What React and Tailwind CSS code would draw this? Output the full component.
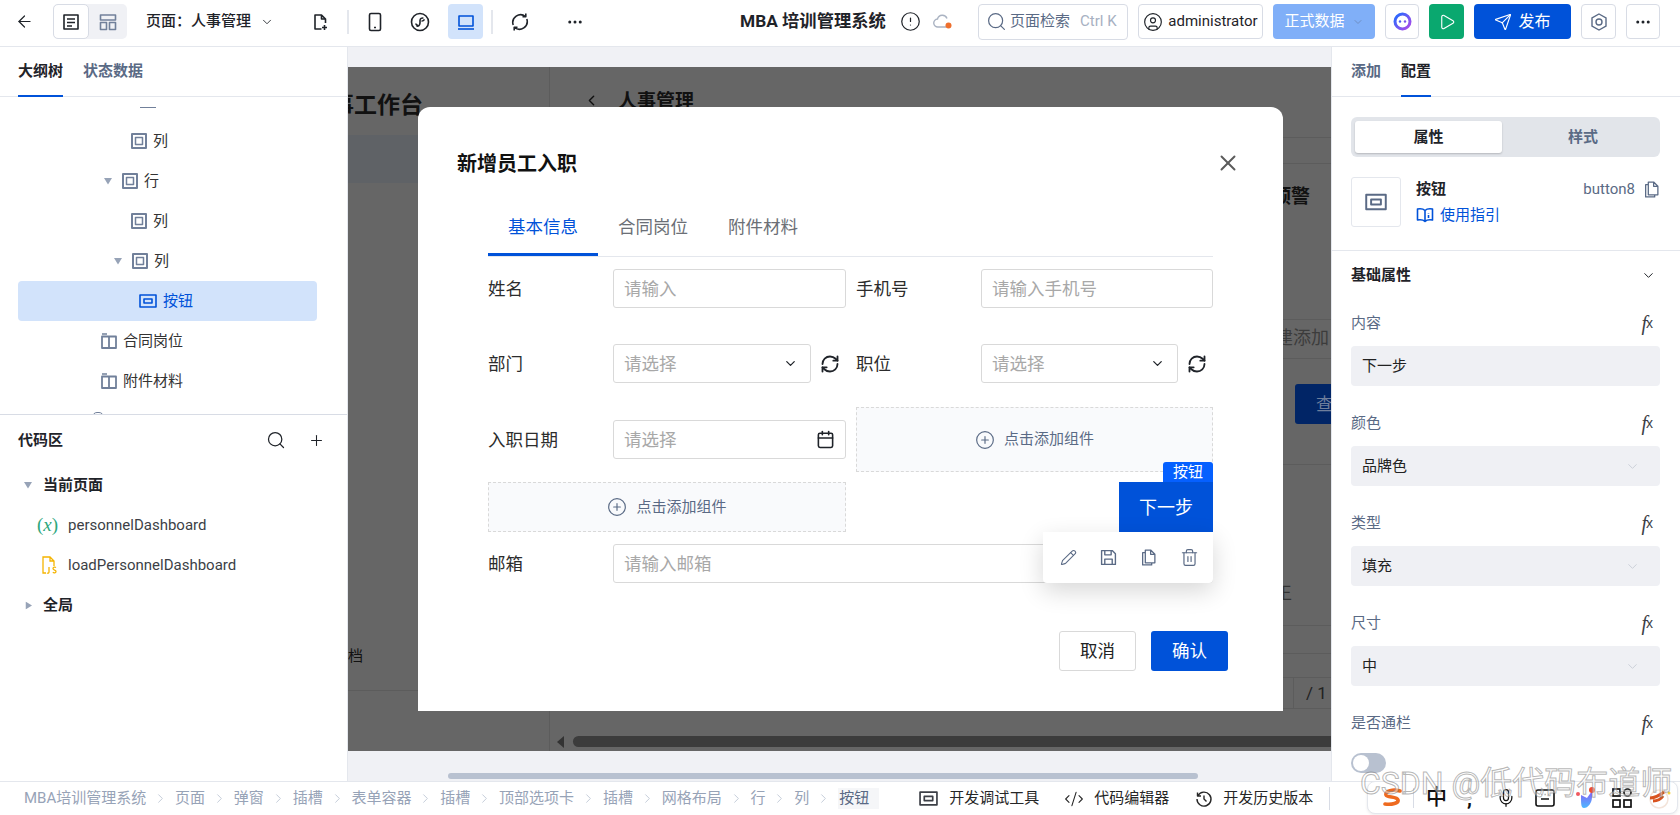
import React from 'react';
import {
  ArrowLeft, ChevronDown, ChevronLeft, ChevronRight, Ellipsis, Search, Plus, X, RefreshCw, CodeXml,
  Calendar, Pencil, Trash2, Mic, CirclePlus, Send, Play, Info, CircleUser,
} from 'lucide-react';

const BLUE = 'bg-[#0052d9]';

function Ico({ size = 18, className = '', children, box = 24 }) {
  return (
    <svg width={size} height={size} viewBox={`0 0 ${box} ${box}`} fill="none" stroke="currentColor" strokeWidth="1.6" strokeLinejoin="round" className={`shrink-0 ${className}`}>
      {children}
    </svg>
  );
}

const ColIcon = ({ size = 16 }) => (
  <Ico size={size} box={16} className="text-[#71809a]">
    <rect x="1" y="1" width="14" height="14" strokeWidth="2" />
    <rect x="4.500" y="4.500" width="7" height="7" strokeWidth="1.500" />
  </Ico>
);
const TabIcon = () => (
  <Ico size={16} box={16} className="text-[#71809a]">
    <path d="M1 3.500h14V15H1zM8 3.500V15" strokeWidth="1.800" />
    <path d="M1 1h5" strokeWidth="1.500" />
  </Ico>
);
const BtnIcon = ({ size = 18, className = 'text-[#0052d9]' }) => (
  <Ico size={size} box={18} className={className}>
    <rect x="1" y="3" width="16" height="12" />
    <rect x="5" y="7" width="8" height="4" />
  </Ico>
);
const Tri = ({ className = '' }) => (
  <svg width="8" height="7" viewBox="0 0 8 7" className={`shrink-0 ${className}`}><path d="M0 0h8L4 6.500z" fill="#97a3b7" /></svg>
);
const CopyIcon = ({ size = 16 }) => (
  <Ico size={size} box={16}>
    <path d="M5 1h5l4 4v8H5zM10 1v4h4M5 3.500H2.500V15H11v-2" strokeWidth="1.200" />
  </Ico>
);
const Fx = () => (
  <span className="mr-[7px] flex h-[22px] items-center font-['Liberation_Serif',serif] text-[20px] leading-none text-[#3c3f46]"><i>f</i><span className="ml-[-1px] font-['Liberation_Sans',sans-serif] text-[14px]">x</span></span>
);

function TreeRow({ pad, tri, icon, label }) {
  return (
    <div className={`flex h-10 items-center text-[15px] text-[#333] ${pad}`}>
      {tri && <Tri className="mr-[10px]" />}
      {icon}
      <span className="ml-[6px]">{label}</span>
    </div>
  );
}

function Header() {
  return (
    <header className="flex h-[47px] shrink-0 items-center border-b border-[#e4e7ed] bg-white pb-[3px] text-[#1f2329]">
      <ArrowLeft size={19} strokeWidth={1.5} className="ml-[15px] shrink-0" />
      <div className="ml-[19px] flex h-[35px] w-[74px] shrink-0 rounded-[5px] bg-[#f0f1f5]">
        <div className="flex w-[36px] items-center justify-center rounded-[5px] border border-[#d8dce5] bg-white">
          <Ico size={18} box={18}><rect x="2" y="2" width="14" height="14" /><path d="M5 6h8M5 9.500h8M5 13h5" /></Ico>
        </div>
        <div className="flex flex-1 items-center justify-center text-[#71809a]">
          <Ico size={18} box={18}><rect x="1.500" y="2" width="15" height="5" /><rect x="1.500" y="9.500" width="6" height="7" /><rect x="10.500" y="9.500" width="6" height="7" /></Ico>
        </div>
      </div>
      <span className="ml-[19px] w-[106px] shrink-0 whitespace-nowrap text-[15px] font-medium">页面：人事管理</span>
      <ChevronDown size={14} strokeWidth={1.5} className="ml-[8px] shrink-0" />
      <Ico size={18} box={18} className="ml-[38px]"><path d="M9.500 16H3V2h6.500l4 4v4M9.500 2v4h4M12.500 12v5M10 14.500h5" /></Ico>
      <div className="ml-[17px] h-[24px] w-[2px] shrink-0 bg-[#e4e7ed]" />
      <Ico size={20} box={20} className="ml-[16px]"><rect x="4.500" y="1.500" width="11" height="17" rx="1.500" /><path d="M9 15.500h2" /></Ico>
      <Ico size={20} box={20} className="ml-[25px]"><circle cx="10" cy="10" r="8.500" /><path d="M6.500 14c2 .5 3.300-.7 3.500-3V8.500c.2-2 1.700-2.800 3.400-2.300M5.900 11.500c.1 1.500 1.300 2 2.200 1.500M11.500 9c1.300.2 2.600-.5 2.600-1.700" /></Ico>
      <div className="ml-[18px] flex h-[35px] w-[35px] shrink-0 items-center justify-center rounded-[4px] bg-[#d2e3fb] text-[#0052d9]">
        <Ico size={20} box={20}><rect x="3" y="4" width="14" height="10" /><path d="M2 17h16" /></Ico>
      </div>
      <div className="ml-[8px] h-[24px] w-[2px] shrink-0 bg-[#e4e7ed]" />
      <Ico size={20} box={20} className="ml-[17px]"><path d="M15.500 4.500A7.800 7.800 0 0 0 3.200 13M4.500 15.500a7.800 7.800 0 0 0 12.300-8.500M15.800 1.500v3.300h-3.300M4.200 18.500v-3.300h3.300" /></Ico>
      <Ellipsis size={18} className="ml-[36px] shrink-0" />
      <span className="ml-[156px] w-[146px] shrink-0 whitespace-nowrap text-[17.300px] font-bold">MBA 培训管理系统</span>
      <Info size={21} strokeWidth={1.4} className="ml-[14px] shrink-0 rotate-180" />
      <svg width="20" height="18" viewBox="0 0 20 18" fill="none" className="ml-[12px] shrink-0">
        <path d="M13 14H5a4 4 0 0 1-.5-8 5 5 0 0 1 9.500-.5" stroke="#aab3c2" strokeWidth="1.400" />
        <circle cx="15.500" cy="12.500" r="3" fill="#ee6f2d" />
      </svg>
      <div className="ml-[25px] flex h-[36px] w-[150px] shrink-0 items-center rounded-[4px] border border-[#d8dce5] pl-[7px] text-[15px] whitespace-nowrap">
        <Search size={21} strokeWidth={1.4} className="shrink-0 text-[#5a6a85]" />
        <span className="ml-[3px] text-[#5a6a85]">页面检索</span>
        <span className="ml-[10px] text-[#a7b1c2]">Ctrl K</span>
      </div>
      <div className="ml-[10px] flex h-[35px] w-[125px] shrink-0 items-center justify-center gap-[5px] rounded-[4px] border border-[#d8dce5] text-[15px]">
        <CircleUser size={20} strokeWidth={1.4} className="shrink-0" />
        <span>administrator</span>
      </div>
      <div className="ml-[10px] flex h-[35px] w-[102px] shrink-0 items-center justify-center gap-[7px] rounded-[4px] bg-[#80aff8] text-[15px] text-white">
        <span>正式数据</span>
        <ChevronDown size={12} className="text-[#6f8fc4]" />
      </div>
      <div className="ml-[10px] flex h-[35px] w-[34px] shrink-0 items-center justify-center rounded-[4px] border border-[#d8dce5]">
        <svg width="21" height="21" viewBox="0 0 21 21" fill="none">
          <defs><linearGradient id="ai" x1="0" y1="0" x2="1" y2="1"><stop offset="0" stopColor="#1f6bff" /><stop offset="1" stopColor="#b04be8" /></linearGradient></defs>
          <circle cx="10.500" cy="10.500" r="7.500" stroke="url(#ai)" strokeWidth="3" />
          <circle cx="8" cy="10.500" r="1.200" fill="#4a5cf0" /><circle cx="13" cy="10.500" r="1.200" fill="#7a55ea" />
        </svg>
      </div>
      <div className="ml-[10px] flex h-[35px] w-[35px] shrink-0 items-center justify-center rounded-[4px] bg-[#0aa86f] text-white">
        <Play size={18} strokeWidth={1.5} />
      </div>
      <div className={`ml-[10px] flex h-[35px] w-[97px] shrink-0 items-center justify-center gap-[6px] rounded-[4px] text-[16px] text-white ${BLUE}`}>
        <Send size={18} strokeWidth={1.5} />
        <span>发布</span>
      </div>
      <div className="ml-[10px] flex h-[35px] w-[35px] shrink-0 items-center justify-center rounded-[4px] border border-[#d8dce5] text-[#5a6a85]">
        <svg width="18" height="20" viewBox="0 0 18 20" fill="none" stroke="currentColor" strokeWidth="1.400"><path d="M9 2l7 4v8l-7 4-7-4V6z" /><circle cx="9" cy="10" r="3" /></svg>
      </div>
      <div className="ml-[10px] flex h-[35px] w-[34px] shrink-0 items-center justify-center rounded-[4px] border border-[#d8dce5]">
        <Ellipsis size={18} />
      </div>
    </header>
  );
}

function LeftPanel() {
  return (
    <aside className="flex w-[348px] shrink-0 flex-col border-r border-[#e4e7ed] bg-white">
      <div className="flex h-[50px] shrink-0 gap-[20px] border-b border-[#e4e7ed] pl-[18px] text-[15px] font-semibold">
        <div className="flex h-[50px] items-center border-b-2 border-[#0052d9] text-[#1f2329]">大纲树</div>
        <div className="flex h-[49px] items-center text-[#5a6a85]">状态数据</div>
      </div>
      <div className="h-[317px] shrink-0 overflow-hidden">
        <div className="h-[24px] pt-[10px] pl-[140px]"><div className="h-px w-[16px] bg-[#71809a]" /></div>
        <TreeRow pad="pl-[131px]" icon={<ColIcon />} label="列" />
        <TreeRow pad="pl-[104px]" tri icon={<ColIcon />} label="行" />
        <TreeRow pad="pl-[131px]" icon={<ColIcon />} label="列" />
        <TreeRow pad="pl-[114px]" tri icon={<ColIcon />} label="列" />
        <div className="mx-[18px] flex h-10 w-[299px] items-center rounded-[4px] bg-[#d2e3fb] pl-[121px] text-[15px] text-[#0052d9]">
          <BtnIcon />
          <span className="ml-[6px]">按钮</span>
        </div>
        <TreeRow pad="pl-[101px]" icon={<TabIcon />} label="合同岗位" />
        <TreeRow pad="pl-[101px]" icon={<TabIcon />} label="附件材料" />
        <div className="pt-[11px] pl-[92px]"><div className="h-[10px] w-[12px] rounded-full border border-[#71809a]" /></div>
      </div>
      <div className="flex-1 border-t border-[#d8dce5]">
        <div className="flex h-[50px] items-center pl-[18px] text-[15px] font-semibold text-[#1f2329]">
          <span>代码区</span>
          <Search size={20} strokeWidth={1.5} className="ml-[203px]" />
          <Plus size={17} strokeWidth={1.5} className="ml-[22px]" />
        </div>
        <div className="flex h-10 items-center pl-[24px] text-[15px] font-semibold text-[#1f2329]">
          <Tri />
          <span className="ml-[11px]">当前页面</span>
        </div>
        <div className="flex h-10 items-center text-[15px] text-[#3c3f46]">
          <span className="ml-[37px] w-[31px] font-['Liberation_Serif',serif] text-[19px] whitespace-nowrap text-[#2ea77c]">(<i>x</i>)</span>
          <span>personnelDashboard</span>
        </div>
        <div className="flex h-10 items-center text-[15px] text-[#3c3f46]">
          <svg width="16" height="20" viewBox="0 0 16 20" fill="none" stroke="#f5b400" strokeWidth="1.300" className="mr-[11px] ml-[41px]">
            <path d="M5 18H2V2h7l4 4v5M9 2v4h4" />
            <path d="M8 12v5c0 1-1 1.500-2 1M15 12.500c-1-.7-3-.5-3 1 0 2 3 1.300 3 3 0 1.500-2 1.800-3.200.8" />
          </svg>
          <span>loadPersonnelDashboard</span>
        </div>
        <div className="flex h-10 items-center pl-[25px] text-[15px] font-semibold text-[#1f2329]">
          <Tri className="-rotate-90" />
          <span className="ml-[10px]">全局</span>
        </div>
      </div>
    </aside>
  );
}

// the page behind the dialog, only the pieces that stick out
function GhostPage() {
  const lines = ['top-[70px]', 'top-[96px]', 'top-[252px]', 'top-[291px]', 'top-[397px]', 'top-[558px]', 'top-[586px]', 'top-[610px]', 'top-[641px]'];
  return (
    <>
      <div className="absolute top-0 bottom-0 left-[201px] w-px bg-[#5c5c5c]" />
      <div className="absolute top-[68px] left-0 h-[48px] w-[70px] bg-[#5f6266]" />
      <span className="absolute top-[24px] left-[-17px] text-[23px] leading-[30px] font-bold whitespace-nowrap text-[#111]">事工作台</span>
      <ChevronLeft size={17} className="absolute top-[25px] left-[235px] text-[#111]" />
      <span className="absolute top-[22px] left-[270px] text-[19px] leading-[26px] font-bold whitespace-nowrap text-[#111]">人事管理</span>
      {lines.map((t) => <div key={t} className={`absolute left-[935px] h-px w-[48px] bg-[#5c5c5c] ${t}`} />)}
      <span className="absolute top-[117px] left-[924px] text-[19px] leading-[26px] font-bold whitespace-nowrap text-[#111]">预警</span>
      <span className="absolute top-[259px] left-[927px] text-[18px] leading-[24px] whitespace-nowrap text-[#3c3c3c]">建添加</span>
      <div className="absolute top-[317px] left-[947px] h-[40px] w-[36px] rounded-l-[3px] bg-[#012566]" />
      <span className="absolute top-[325px] left-[968px] text-[17px] leading-[24px] text-[#6f7f9c]">查</span>
      <span className="absolute top-[514px] left-[927px] text-[17px] leading-[24px] text-[#333]">王</span>
      <div className="absolute top-[610px] left-[945px] h-[31px] w-px bg-[#5c5c5c]" />
      <span className="absolute top-[614px] left-[958px] text-[17px] leading-[24px] whitespace-nowrap text-[#222]">/ 1</span>
      <span className="absolute top-[579px] left-0 text-[15px] leading-[20px] text-[#111]">档</span>
      <div className="absolute top-[623px] left-0 h-px w-[70px] bg-[#5c5c5c]" />
      <svg width="7" height="12" viewBox="0 0 7 12" className="absolute top-[669px] left-[209px]"><path d="M7 0v12L0 6z" fill="#333" /></svg>
      <div className="absolute top-[669px] left-[225px] h-[11px] w-[758px] rounded-l-full bg-[#3c3c3c]" />
    </>
  );
}

const Box = ({ text, arrow, refresh, cal, w = 'flex-1' }) => (
  <div className="flex flex-1 items-center">
    <div className={`flex h-[39px] items-center rounded-[3px] border border-[#d9d9d9] pr-[10px] pl-[10px] text-[17.500px] text-[#a8a8a8] ${w}`}>
      <span className="flex-1 pt-px">{text}</span>
      {arrow && <ChevronDown size={15} strokeWidth={2} className="mr-[2px] text-[#1f2329]" />}
      {cal && <Calendar size={19} strokeWidth={2} className="text-[#1f2329]" />}
    </div>
    {refresh && <RefreshCw size={20} strokeWidth={2.200} className="ml-[9px] text-[#1f2329]" />}
  </div>
);

const AddSlot = ({ className }) => (
  <div className={`flex items-center justify-center gap-[9px] border border-dashed border-[#d9d9d9] bg-[#f9fafc] text-[15px] text-[#5a6a85] ${className}`}>
    <CirclePlus size={20} strokeWidth={1.400} />
    <span>点击添加组件</span>
  </div>
);

const Label = ({ children }) => (
  <span className="w-[125px] shrink-0 pt-px text-[17.500px] text-[#2c2c2c]">{children}</span>
);

function Dialog() {
  return (
    <div className="absolute top-[40px] left-[70px] z-10 h-[604px] w-[865px] rounded-t-[12px] bg-white">
      <div className="flex h-[92px] items-center justify-between pt-[20px] pr-[42px] pl-[39px]">
        <h2 className="pt-[2px] text-[20px] leading-[28px] font-bold text-[#111]">新增员工入职</h2>
        <X size={26} strokeWidth={1.800} className="text-[#5b5b5b]" />
      </div>
      <div className="mx-[70px] flex h-[58px] border-b border-[#e4e7ed] text-[17.500px] text-[#6b6f76]">
        <div className="flex h-[57px] w-[110px] items-center justify-center border-b-[3px] border-[#0052d9] pt-[2px] text-[#0052d9]">基本信息</div>
        <div className="flex h-[57px] w-[110px] items-center justify-center pb-px">合同岗位</div>
        <div className="flex h-[57px] w-[110px] items-center justify-center pb-px">附件材料</div>
      </div>
      <div className="mx-[70px] pt-[12px]">
        <div className="grid grid-cols-[358px_357px] gap-x-[10px]">
          <div className="mb-[36px] flex h-[39px] items-center"><Label>姓名</Label><Box text="请输入" /></div>
          <div className="mb-[36px] flex h-[39px] items-center"><Label>手机号</Label><Box text="请输入手机号" /></div>
          <div className="mb-[24px] flex h-[39px] items-center"><Label>部门</Label><Box text="请选择" arrow refresh w="w-[198px]" /></div>
          <div className="mb-[24px] flex h-[39px] items-center"><Label>职位</Label><Box text="请选择" arrow refresh w="w-[197px]" /></div>
          <div className="mb-[10px] flex h-[65px] items-center"><Label>入职日期</Label><Box text="请选择" cal /></div>
          <AddSlot className="mb-[10px] h-[65px]" />
          <AddSlot className="mb-[12px] h-[50px]" />
          <div className="relative mb-[12px] flex h-[50px] justify-end">
            <div className="absolute top-[-20px] right-0 flex h-[20px] w-[50px] items-center justify-center rounded-t-[3px] bg-[#0560ff] text-[15px] text-white">按钮</div>
            <div className={`flex w-[94px] items-center justify-center text-[18px] text-white ${BLUE}`}>下一步</div>
            <div className="absolute top-[50px] right-0 z-10 flex h-[51px] w-[170px] items-center gap-[23px] rounded-b-[4px] bg-white pl-[17px] text-[#5a6a85] shadow-[0_8px_24px_rgba(0,0,0,0.16)]">
              <Pencil size={17} strokeWidth={1.500} />
              <Ico size={17} box={16}><path d="M1.500 1.500h10l3 3v10h-13zM4.500 1.500v4h6v-4M4.500 14.500v-5h7v5" strokeWidth="1.300" /></Ico>
              <CopyIcon size={17} />
              <Trash2 size={19} strokeWidth={1.500} />
            </div>
          </div>
        </div>
        <div className="flex h-[39px] items-center"><Label>邮箱</Label><Box text="请输入邮箱" /></div>
      </div>
      <div className="flex justify-end gap-[15px] pt-[48px] pr-[55px] text-[17.500px]">
        <div className="flex h-[40px] w-[77px] items-center justify-center rounded-[3px] border border-[#d9d9d9] text-[#222]">取消</div>
        <div className={`flex h-[40px] w-[77px] items-center justify-center rounded-[3px] text-white ${BLUE}`}>确认</div>
      </div>
    </div>
  );
}

function PropRow({ label, value, select }) {
  return (
    <div>
      <div className="flex h-[60px] items-start justify-between pt-[26px] text-[15px] leading-[22px] text-[#5a6a85]">
        <span>{label}</span>
        <Fx />
      </div>
      {value && (
        <div className="flex h-[40px] items-center rounded-[4px] bg-[#eff0f4] pr-[20px] pl-[11px] text-[15px] text-[#222]">
          <span className="flex-1">{value}</span>
          {select && <ChevronDown size={15} strokeWidth={1.200} className="text-[#bfc5cf]" />}
        </div>
      )}
    </div>
  );
}

function RightPanel() {
  return (
    <aside className="flex w-[349px] shrink-0 flex-col border-l border-[#e4e7ed] bg-white">
      <div className="flex h-[50px] shrink-0 gap-[20px] border-b border-[#e4e7ed] pl-[19px] text-[15px] font-semibold">
        <div className="flex h-[49px] items-center text-[#5a6a85]">添加</div>
        <div className="flex h-[50px] items-center border-b-2 border-[#0052d9] text-[#1f2329]">配置</div>
      </div>
      <div className="pr-[20px] pl-[19px]">
        <div className="mt-[20px] flex h-[40px] items-center rounded-[6px] bg-[#e2e5ea] pl-[4px] text-[15px] font-semibold">
          <div className="flex h-[32px] w-[147px] items-center justify-center rounded-[3px] bg-white text-[#1f2329] shadow-[0_1px_2px_rgba(0,0,0,0.2)]">属性</div>
          <div className="flex h-[32px] flex-1 items-center justify-center pl-[4px] text-[#5a6a85]">样式</div>
        </div>
        <div className="mt-[20px] flex h-[50px]">
          <div className="flex w-[50px] items-center justify-center rounded-[3px] border border-[#e4e7ed]">
            <BtnIcon size={22} className="text-[#5a6a85]" />
          </div>
          <div className="ml-[15px] flex flex-col justify-between py-[2px]">
            <span className="text-[15px] leading-[20px] font-semibold text-[#1f2329]">按钮</span>
            <span className="flex items-center gap-[6px] text-[15px] leading-[20px] text-[#0052d9]">
              <Ico size={18} box={18}><path d="M9 4.500C7.500 3 4.500 2.500 1.500 3v11c3-.5 6 0 7.500 1.500 1.500-1.500 4.500-2 7.500-1.500V3c-3-.5-6 0-7.500 1.500zM9 4.500v11M12.500 7v.5M12.500 9v3" /></Ico>
              使用指引
            </span>
          </div>
          <div className="ml-auto flex h-[24px] items-center gap-[8px] text-[15px] text-[#5a6a85]">
            <span>button8</span>
            <CopyIcon size={17} />
          </div>
        </div>
      </div>
      <div className="mt-[23px] h-px bg-[#e4e7ed]" />
      <div className="pr-[20px] pl-[19px]">
        <div className="flex h-[35px] items-end justify-between text-[15px] font-semibold text-[#1f2329]">
          <span className="-mb-px h-[24px] leading-[24px]">基础属性</span>
          <ChevronDown size={15} strokeWidth={1.600} className="mr-[4px] mb-[3px]" />
        </div>
        <PropRow label="内容" value="下一步" />
        <PropRow label="颜色" value="品牌色" select />
        <PropRow label="类型" value="填充" select />
        <PropRow label="尺寸" value="中" select />
        <PropRow label="是否通栏" />
        <div className="mt-[7px] flex h-[20px] w-[35px] items-center rounded-full bg-[#b8c1d0] pl-[2px]">
          <div className="h-[16px] w-[16px] rounded-full bg-white" />
        </div>
      </div>
    </aside>
  );
}

function Crumb({ last, children }) {
  if (last) return <span className="flex h-[21px] items-center bg-[#f5f6f8] pr-[10px] pl-px text-[#5a6a85]">{children}</span>;
  return (
    <>
      <span>{children}</span>
      <span className="flex w-[28.800px] justify-center"><ChevronRight size={15} strokeWidth={1.300} className="text-[#b8c1d0]" /></span>
    </>
  );
}

function Footer() {
  const path = ['MBA培训管理系统', '页面', '弹窗', '插槽', '表单容器', '插槽', '顶部选项卡', '插槽', '网格布局', '行', '列'];
  return (
    <footer className="flex h-[34px] shrink-0 items-center border-t border-[#e4e7ed] bg-white pl-[24px] text-[15px] whitespace-nowrap text-[#97a3b7]">
      {path.map((p, i) => <Crumb key={i}>{p}</Crumb>)}
      <Crumb last>按钮</Crumb>
      <BtnIcon size={19} className="ml-[40px] text-[#3c3f46]" />
      <span className="ml-[11px] text-[#262626]">开发调试工具</span>
      <CodeXml size={20} strokeWidth={1.300} className="ml-[25px] text-[#262626]" />
      <span className="ml-[10px] text-[#262626]">代码编辑器</span>
      <Ico size={18} box={18} className="ml-[26px] text-[#262626]"><path d="M3 5.500A7 7 0 1 1 2 9M2.500 2.500v3.500H6M9 5.500V9l2.500 2.500" strokeWidth="1.400" /></Ico>
      <span className="ml-[10px] text-[#262626]">开发历史版本</span>
      <div className="ml-[16px] h-[23px] w-px bg-[#d8dce5]" />
    </footer>
  );
}

function ImeBar() {
  return (
    <div className="absolute right-[2px] bottom-[1px] z-20 flex h-[33px] w-[311px] items-center rounded-[8px] border border-[#e4e7ed] bg-white pl-[13px] shadow-[0_1px_3px_rgba(0,0,0,0.08)]">
      <svg width="22" height="20" viewBox="0 0 22 20" fill="none" stroke="#ee6a1f" strokeWidth="3.600" strokeLinecap="round"><path d="M19 3C12 1 4 3 5 7c1 3 11 1 12 5 .8 3-6 5-13 4" /></svg>
      <div className="ml-[10px] h-[20px] w-px bg-[#d8dce5]" />
      <span className="ml-[12px] text-[21px] leading-none font-medium text-[#111]">中</span>
      <span className="ml-[20px] w-[10px] text-[20px] leading-none font-bold text-[#111]">,</span>
      <Mic size={20} strokeWidth={1.500} className="ml-[19px] text-[#111]" />
      <svg width="20" height="18" viewBox="0 0 20 18" fill="none" stroke="#111" strokeWidth="1.600" className="ml-[19px]"><rect x="1" y="1" width="18" height="16" rx="2" /><path d="M6 10h8M6 5.500h.5M9.800 5.500h.5M13.600 5.500h.5" /></svg>
      <svg width="20" height="22" viewBox="0 0 20 22" className="ml-[21px]"><defs><linearGradient id="ime" x1="0" y1="0" x2="0" y2="1"><stop offset="0" stopColor="#8a5cf6" /><stop offset="1" stopColor="#4db8ff" /></linearGradient></defs><path d="M5 8l6 3 5-7v6c0 6-4 11-8 11-3 0-3-4-3-13z" fill="url(#ime)" /><circle cx="2" cy="7" r="2" fill="#f0595f" /><circle cx="16" cy="3" r="3" fill="#ee4c2d" /></svg>
      <svg width="20" height="20" viewBox="0 0 20 20" fill="none" stroke="#111" strokeWidth="1.700" className="ml-[16px]"><rect x="1" y="1" width="7" height="7" /><rect x="12" y="12" width="7" height="7" /><rect x="1" y="12" width="7" height="7" /><circle cx="15.500" cy="4.500" r="3.500" /></svg>
      <svg width="24" height="22" viewBox="0 0 24 22" fill="none" className="ml-[15px]"><circle cx="12" cy="12" r="9" stroke="#f3e4da" strokeWidth="1.500" /><path d="M3 11c5 0 10-3 14-6M6 14c4 0 8-2 10-5" stroke="#d9531e" strokeWidth="3" /><circle cx="22" cy="6" r="1.500" fill="#f5d142" /></svg>
    </div>
  );
}

export default function App() {
  return (
    <div className="relative flex h-[815px] w-[1680px] flex-col overflow-hidden bg-white font-[Roboto,'Noto_Sans_CJK_SC',sans-serif]">
      <Header />
      <div className="flex min-h-0 flex-1">
        <LeftPanel />
        <main className="flex min-w-0 flex-1 flex-col bg-[#f0f1f5]">
          <div className="relative mt-[20px] h-[684px] shrink-0 overflow-hidden bg-[#666666]">
            <GhostPage />
            <Dialog />
          </div>
          <div className="mt-[22px] ml-[100px] h-[6px] w-[750px] rounded-full bg-[#b8c1d0]" />
        </main>
        <RightPanel />
      </div>
      <Footer />
      <ImeBar />
      <span className="pointer-events-none absolute top-[763px] left-[1360px] z-30 text-[32px] leading-[40px] whitespace-nowrap text-[rgba(255,255,255,0.45)] [-webkit-text-stroke:1px_rgba(110,110,110,0.5)]">CSDN @低代码布道师</span>
    </div>
  );
}
